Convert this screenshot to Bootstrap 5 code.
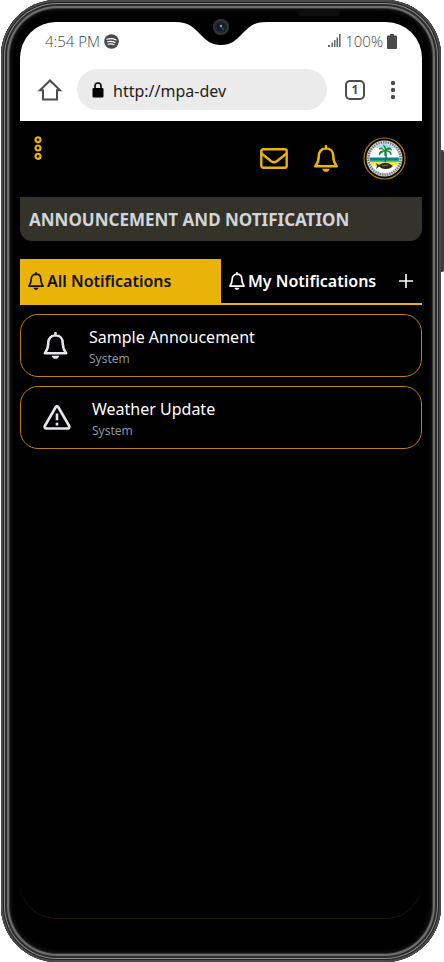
<!DOCTYPE html>
<html lang="en">
<head>
<meta charset="utf-8">
<meta name="viewport" content="width=device-width, initial-scale=1">
<title>Announcement and Notification</title>
<link href="https://cdn.jsdelivr.net/npm/bootstrap@5.3.0/dist/css/bootstrap.min.css" rel="stylesheet">
<style>
  :root { --gold: #eab308; --edge: #bc800c; }
  body { font-family: "Noto Sans", "Open Sans", sans-serif; background: #fff; }
  .plain { background: none; border: 0; padding: 0; color: inherit; line-height: 1; }
  .plain svg, .glyph { display: block; flex: none; overflow: visible; }
  .stage { min-height: 100vh; padding: 0 3px 0 1px; }
  .phone {
    padding: 22px 19px 44px; border-radius: 56px; background: #000;
    box-shadow: inset 0 0 0 2px #4b4b4b, inset 0 0 0 3px #222, inset 0 0 0 4px #8a8a8a,
      inset 0 0 0 6px #2c2c2c, inset 0 0 0 8px #6e6e6e, inset 0 0 0 9px #333, inset 0 0 4px 10px #181818;
  }
  .side-key { width: 3px; height: 122px; top: 150px; right: 0; background: #3c3c3e; border-radius: 0 2px 2px 0; }
  .speaker { top: 10px; left: 298px; width: 42px; height: 6px; border-radius: 3px; background: #0d0d0d; }
  .screen { border-radius: 36px; box-shadow: 0 1px 0 #20130d; }
  .notch { top: 0; left: 50%; transform: translateX(-50%); }
  .browser { background: #fff; color: #4d4d4d; border-radius: 36px 36px 0 0; }
  .status { height: 38px; padding: 0 25px; font-family: "Open Sans", sans-serif; font-weight: 300; font-size: 15px; color: #444; }
  .tools { height: 61px; padding: 9px 25px 11px 19px; }
  .omnibox { height: 41px; border-radius: 21px; background: #ebebeb; color: #000; margin-left: 16px; margin-right: 18px; padding: 0 15px; }
  .omnibox input { font-size: 16px; line-height: 24px; color: #222; min-width: 0; padding: 2px 0 0 1px; }
  .omnibox input:focus { outline: 0; }
  .tabcount { flex: none; width: 20px; height: 20px; border: 2px solid #4d4d4d; border-radius: 5px; font-size: 12px; font-weight: 700; color: #4d4d4d; }
  .topbar { height: 76px; padding: 0 16px 2px 14px; color: var(--gold); }
  .notice { margin-left: 26px; margin-right: 25px; }
  .heading { height: 44px; padding: 2px 9px 0; border-radius: 0 0 12px 12px; background: #333329; color: #d1d5db; font-size: 17px; font-weight: 700; }
  .tabs { height: 46px; margin-top: 18px; border-bottom: 2px solid var(--gold); font-size: 16px; font-weight: 600; }
  .tabs .nav-link { border: 0; border-radius: 0; background: none; color: #fff; padding: 0 8px; line-height: 20px; }
  .tabs .nav-link.active { background: var(--gold); color: #111; }
  .tabs .nav-link svg { margin-right: 3px; }
  .add { margin-right: 8px; }
  .notes { padding-top: 9px; gap: 9px; }
  .note { height: 63px; border: 1px solid var(--edge); border-radius: 18px; padding: 0 22px; color: #e5e7eb; text-decoration: none; }
  .note-text { margin-left: 21px; padding-top: 2px; }
  .note-title { font-size: 16px; line-height: 24px; color: #fff; }
  .note-from { font-size: 12px; line-height: 20px; color: #8d939e; }
</style>
</head>
<body>
<svg class="d-none" xmlns="http://www.w3.org/2000/svg">
  <symbol id="bell" viewBox="0 0 24 27">
    <path d="M12 1v2.500M12 3.300c-4.700 0-7.200 3.500-7.200 7.600 0 5.500-1.400 7.300-3.500 10.300h21.400c-2.100-3-3.500-4.800-3.500-10.300 0-4.100-2.500-7.600-7.200-7.600z" fill="none" stroke="currentColor" stroke-width="2.500" stroke-linejoin="round" stroke-linecap="round"/>
    <path d="M8.300 23.700h7.400c-.3 2-1.800 3.100-3.700 3.100s-3.400-1.100-3.700-3.100z" fill="currentColor"/>
  </symbol>
</svg>
<div class="stage position-relative d-flex">
  <div class="side-key position-absolute"></div>
  <div class="phone flex-grow-1 d-flex flex-column">
    <div class="speaker position-absolute"></div>
    <div class="screen flex-grow-1 position-relative">
      <header class="browser">
        <svg class="notch position-absolute" width="92" height="24" viewBox="0 0 92 24" overflow="visible">
          <defs><radialGradient id="lens"><stop offset="0" stop-color="#17344a"/><stop offset=".4" stop-color="#0f1a24"/><stop offset=".7" stop-color="#26282c"/><stop offset="1" stop-color="#3b3c40"/></radialGradient></defs>
          <path d="M0-1V0C14 0 18 5 25 12s11 11 21 11 14-4 21-11S78 0 92 0v-1z" fill="#000"/>
          <circle cx="46" cy="5" r="8" fill="url(#lens)"/><circle cx="46" cy="4" r="1.200" fill="#7fa6c0"/><circle cx="48" cy="7" r="1" fill="#34556c"/>
        </svg>
        <div class="status d-flex align-items-center justify-content-between">
          <span class="d-flex align-items-center gap-1">4:54 PM
            <svg class="glyph" width="15" height="15" viewBox="0 0 15 15"><circle cx="7.500" cy="7.500" r="7.300" fill="#4a4a4a"/><path d="M3 5.200c3-1 6.500-.7 9 .7M3.500 7.800c2.600-.8 5.300-.5 7.500.7M4 10.200c2-.6 4.200-.4 6 .6" fill="none" stroke="#fff" stroke-width="1.200" stroke-linecap="round"/></svg>
          </span>
          <span class="d-flex align-items-center gap-1">
            <svg class="glyph" width="13" height="14" viewBox="0 0 13 14" fill="#666"><path d="M0 11h2v2H0zM3.500 8.500h1.500V13H3.500zM6 6h1.500v7H6zM8.500 3.500H10V13H8.500zM11 0h1.600v13H11z"/></svg>
            100%
            <svg class="glyph" width="10" height="15" viewBox="0 0 10 15" fill="#4a4a4a"><path d="M3 0h4v1.500h2q1 0 1 1V14q0 1-1 1H1q-1 0-1-1V2.500q0-1 1-1h2z"/></svg>
          </span>
        </div>
        <div class="tools d-flex align-items-center">
          <button class="plain" type="button" aria-label="Home"><svg width="22" height="22" viewBox="0 0 22 22" fill="none" stroke="#4d4d4d" stroke-width="2"><path d="M1 11.300L11 1.500l10 9.800h-3V20.500H4V11.300z"/></svg></button>
          <label class="omnibox d-flex align-items-center flex-grow-1 gap-2" for="address">
            <svg class="glyph" width="12" height="16" viewBox="0 0 12 16"><rect x=".5" y="6" width="11" height="9.500" rx="1" fill="#000"/><path d="M3 7V4a3 3 0 0 1 6 0v3" fill="none" stroke="#000" stroke-width="1.600"/></svg>
            <input class="plain w-100" id="address" type="text" value="http://mpa-dev" aria-label="Address">
          </label>
          <button class="plain tabcount d-flex align-items-center justify-content-center" type="button" aria-label="Open tabs">1</button>
          <button class="plain ms-4" type="button" aria-label="Browser menu"><svg width="8" height="20" viewBox="0 0 8 20" fill="#4d4d4d"><circle cx="4" cy="3" r="2.200"/><circle cx="4" cy="10" r="2.200"/><circle cx="4" cy="17" r="2.200"/></svg></button>
        </div>
      </header>

      <nav class="topbar d-flex align-items-center" aria-label="Main">
        <button class="plain align-self-start mt-3 me-auto" type="button" aria-label="Menu"><svg width="8" height="24" viewBox="0 0 8 24" fill="none" stroke="currentColor" stroke-width="2.200"><circle cx="4" cy="2.800" r="2.500"/><circle cx="4" cy="11" r="2.500"/><circle cx="4" cy="19.300" r="2.500"/></svg></button>
        <button class="plain" type="button" aria-label="Messages"><svg width="28" height="21" viewBox="0 0 28 21" fill="none" stroke="currentColor" stroke-width="2.400" stroke-linejoin="round"><rect x="1.300" y="1.300" width="25.400" height="18.400" rx="2"/><path d="M1.500 5.500l9.700 7.700q2.800 2 5.600 0l9.700-7.700"/></svg></button>
        <button class="plain notice" type="button" aria-label="Notifications"><svg width="24" height="27"><use href="#bell"/></svg></button>
        <button class="plain" type="button" aria-label="Profile">
          <svg width="43" height="43" viewBox="0 0 43 43">
            <defs><clipPath id="seal"><circle cx="21.500" cy="21.500" r="14.500"/></clipPath></defs>
            <circle cx="21.500" cy="21.500" r="20.500" fill="#000" stroke="#a87a0a" stroke-width="1.200"/>
            <circle cx="21.500" cy="21.500" r="18" fill="#d4d4d4"/>
            <circle cx="21.500" cy="21.500" r="16.200" fill="none" stroke="#777" stroke-width="2.400" stroke-dasharray="1.300 1.100"/>
            <g clip-path="url(#seal)">
              <path fill="#fff" d="M5 5h33v33H5z"/><path fill="#a9dcf5" d="M10 7h23v4H10z"/>
              <path fill="#087f8c" d="M5 20.500h33v4H5z"/><path fill="#35c6a0" d="M5 23.500h33v2H5z"/><path fill="#eeea35" d="M5 25h33v3.500H5z"/>
              <path d="M22.500 14q1.500 6-.5 11" fill="none" stroke="#176b3a" stroke-width="1.400"/>
              <path d="M22 14q-3-5-6-2 3-1 6 2-6-1-6 4 3-3 6-4-1 3 0 5 1-3 1-5 4 0 5 4 1-5-5-4 3-3 6-1-2-4-6-1 0-3-3-4 2 2 2 4z" fill="#128a3a" stroke="#128a3a" stroke-width=".7"/>
              <path d="M13 26l3 2q5-3.500 10-1.500l4 2.500q-3 3.500-8 3-3 0-6-2.500L13 32l1-3z" fill="#292719"/><path d="M19 29l6-1" stroke="#857a43"/>
            </g>
          </svg>
        </button>
      </nav>

      <main>
        <h1 class="heading d-flex align-items-center mb-0">ANNOUNCEMENT AND NOTIFICATION</h1>
        <div class="tabs nav flex-nowrap" role="tablist">
          <button class="nav-link active w-50 d-flex align-items-center text-nowrap" type="button" role="tab" aria-selected="true"><svg class="glyph" width="16" height="18"><use href="#bell"/></svg>All Notifications</button>
          <div class="w-50 d-flex align-items-center justify-content-between">
            <button class="nav-link d-flex align-items-center text-nowrap" type="button" role="tab" aria-selected="false"><svg class="glyph" width="16" height="18"><use href="#bell"/></svg>My Notifications</button>
            <button class="plain add text-white" type="button" aria-label="Add tab"><svg width="16" height="16" viewBox="0 0 16 16" stroke="currentColor" stroke-width="1.600"><path d="M8 1v14M1 8h14"/></svg></button>
          </div>
        </div>
        <div class="notes d-flex flex-column">
          <a class="note d-flex align-items-center" href="#">
            <svg class="glyph" width="25" height="27"><use href="#bell"/></svg>
            <span class="note-text d-flex flex-column"><span class="note-title">Sample Annoucement</span><span class="note-from">System</span></span>
          </a>
          <a class="note d-flex align-items-center" href="#">
            <svg class="glyph" width="28" height="25" viewBox="0 0 28 25" fill="none" stroke="currentColor" stroke-width="2.600" stroke-linejoin="round"><path d="M12.800 2q1.200-1.500 2.400 0l11 19q.7 2.300-1.500 2.500H3.300q-2.200-.2-1.500-2.500z"/><path d="M14 8.500v6.800M14 17.700v2.700"/></svg>
            <span class="note-text d-flex flex-column"><span class="note-title">Weather Update</span><span class="note-from">System</span></span>
          </a>
        </div>
      </main>
    </div>
  </div>
</div>
<script src="https://cdn.jsdelivr.net/npm/bootstrap@5.3.0/dist/js/bootstrap.bundle.min.js"></script>
</body>
</html>
